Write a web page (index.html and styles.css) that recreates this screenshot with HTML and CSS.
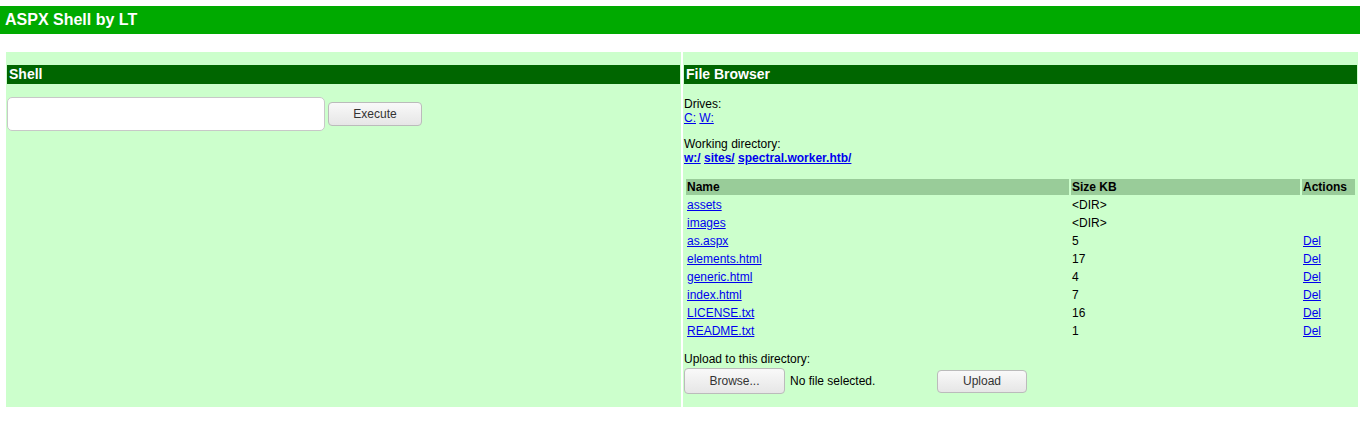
FILE: index.html
```html
<!DOCTYPE html>
<html>
    <head>
        <meta charset="UTF-8">
        <title>ASPX Shell by LT</title>
        <link rel="stylesheet" href="styles.css">
    </head>
    <body>
        <div class="topbar">ASPX Shell by LT</div>

        <div class="main">
            <div class="panel">
                <div class="panelTitle">Shell</div>
                <div class="shellRow">
                    <input type="text" class="cmdBox">
                    <button class="btn execBtn">Execute</button>
                </div>
            </div>
            <div class="panel browser">
                <div class="panelTitle">File Browser</div>
                <div class="block">
                    Drives:<br>
                    <a href="#">C:</a> <a href="#">W:</a>
                </div>
                <div class="block">
                    Working directory:<br>
                    <b><a href="#">w:/</a> <a href="#">sites/</a> <a href="#">spectral.worker.htb/</a></b>
                </div>
                <table class="files">
                    <tr>
                        <th class="colName">Name</th>
                        <th class="colSize">Size KB</th>
                        <th>Actions</th>
                    </tr>
                    <tr><td><a href="#">assets</a></td><td>&lt;DIR&gt;</td><td></td></tr>
                    <tr><td><a href="#">images</a></td><td>&lt;DIR&gt;</td><td></td></tr>
                    <tr><td><a href="#">as.aspx</a></td><td>5</td><td><a href="#">Del</a></td></tr>
                    <tr><td><a href="#">elements.html</a></td><td>17</td><td><a href="#">Del</a></td></tr>
                    <tr><td><a href="#">generic.html</a></td><td>4</td><td><a href="#">Del</a></td></tr>
                    <tr><td><a href="#">index.html</a></td><td>7</td><td><a href="#">Del</a></td></tr>
                    <tr><td><a href="#">LICENSE.txt</a></td><td>16</td><td><a href="#">Del</a></td></tr>
                    <tr><td><a href="#">README.txt</a></td><td>1</td><td><a href="#">Del</a></td></tr>
                </table>
                <div class="upload">
                    Upload to this directory:
                    <div class="uploadRow">
                        <div class="fakeFile">
                            <button class="btn browseBtn">Browse...</button>
                            <span class="noFile">No file selected.</span>
                        </div>
                        <button class="btn uploadBtn">Upload</button>
                    </div>
                </div>
            </div>
        </div>
    </body>
</html>
```

FILE: styles.css
```css
html, body {
    margin: 0px;
    padding: 0px;
    background-color: #fff;
    font-family: "Liberation Sans", Arial, sans-serif;
    font-size: 12px;
    color: #000;
}

a {
    color: #0000ee;
}

.topbar {
    margin-top: 6px;
    height: 28px;
    line-height: 28px;
    padding-left: 5px;
    background-color: #00aa00;
    color: #fff;
    font-size: 16px;
    font-weight: bold;
}

.main {
    display: flex;
    gap: 2px;
    margin: 18px 2px 0px 6px;
}

.panel {
    flex: 1;
    padding: 1px;
    background-color: #ccffcc;
}

.panelTitle {
    margin-top: 12px;
    height: 19px;
    line-height: 19px;
    padding-left: 2px;
    background-color: #006600;
    color: #fff;
    font-size: 14px;
    font-weight: bold;
}

.shellRow {
    display: flex;
    align-items: center;
    margin-top: 13px;
}

.cmdBox {
    width: 318px;
    height: 34px;
    box-sizing: border-box;
    border: 1px solid #c8c8c8;
    border-radius: 5px;
    background-color: #fff;
}

.btn {
    box-sizing: border-box;
    border: 1px solid #bbbbbb;
    border-radius: 4px;
    background: linear-gradient(#f9f9f9, #e6e6e6);
    color: #333;
    font-family: "Liberation Sans", Arial, sans-serif;
    font-size: 12px;
    padding: 0px;
}

.execBtn {
    width: 94px;
    height: 24px;
    margin-left: 3px;
}

.browser {
    padding-bottom: 13px;
    line-height: 14px;
}

.block {
    margin-top: 13px;
}

.block + .block {
    margin-top: 12px;
}

.files {
    width: 100%;
    margin-top: 12px;
    border-spacing: 2px;
    font-size: 12px;
}

.files th {
    background-color: #99cc99;
    text-align: left;
    padding: 1px;
    line-height: 14px;
}

.files td {
    padding: 1px;
    line-height: 14px;
}

.colName {
    width: 381px;
}

.colSize {
    width: 227px;
}

.upload {
    margin-top: 11px;
}

.uploadRow {
    display: flex;
    align-items: center;
    margin-top: 2px;
}

.fakeFile {
    display: flex;
    align-items: center;
    width: 253px;
}

.browseBtn {
    width: 101px;
    height: 26px;
}

.noFile {
    margin-left: 5px;
}

.uploadBtn {
    width: 90px;
    height: 23px;
}
```
